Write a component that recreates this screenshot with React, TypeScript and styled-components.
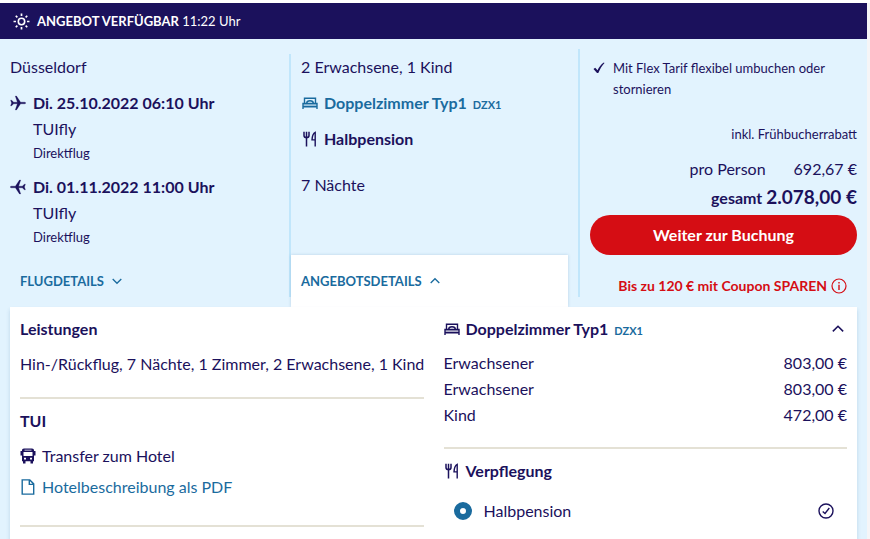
import React from "react";
import styled, { createGlobalStyle, css } from "styled-components";

const navy = "#1b115c";
const blue = "#1a6b9e";
const red = "#d50d14";
const sky = "#e2f3fe";

const GlobalStyle = createGlobalStyle`
  * { box-sizing: border-box; }
  html, body { margin: 0; background: #fff; }
  body, button, input {
    font-family: Lato, "Noto Sans", sans-serif;
    font-size: 16px;
    font-weight: 400;
    line-height: 24px;
    color: ${navy};
  }
  strong { font-weight: 700; }
  h2, h3, p, ul { margin: 0; padding: 0; font-size: 16px; }
  a { color: ${blue}; text-decoration: none; }
  button { border: 0; background: none; padding: 0; cursor: pointer; }
`;

const Page = styled.main`
  display: flex;
  flex-direction: column;
  height: 100vh;
  overflow: hidden;
  padding-right: 3px;
  border-top: 3px solid #fff;
  background: #f5f5f7;
`;
const Banner = styled.header`
  display: flex;
  flex: none;
  align-items: center;
  gap: 7px;
  height: 36px;
  padding: 0 13px;
  background: ${navy};
  color: #fff;
  font-size: 13px;
`;
const BannerText = styled.span`
  line-height: 20px;
`;
const Offer = styled.section`
  flex: 1;
  display: flex;
  flex-direction: column;
  background: ${sky};
`;
const Summary = styled.div`
  display: grid;
  grid-template-columns: repeat(3, minmax(0, 1fr));
`;
const Column = styled.div<{ $line?: number }>`
  display: flex;
  flex-direction: column;
  justify-content: space-between;
  ${(p) =>
    p.$line &&
    css`
      background: linear-gradient(#c1e6fb, #c1e6fb) 0 ${p.$line}px / 2px
        calc(100% - ${p.$line + 10}px) no-repeat;
    `}
`;
const ColumnBody = styled.div<{ $inset?: number }>`
  display: flex;
  flex-direction: column;
  gap: 12px;
  padding: 16px 10px 0 ${(p) => p.$inset ?? 10}px;
`;
const Flight = styled.div`
  display: grid;
  grid-template-columns: 16px 1fr;
  column-gap: 7px;
  align-items: center;
`;
const FlightInfo = styled.span<{ $small?: boolean }>`
  grid-column: 2;
  font-size: ${(p) => (p.$small ? 13 : 16)}px;
  line-height: ${(p) => (p.$small ? 20 : 28)}px;
`;
const IconLine = styled.div<{ $linked?: boolean }>`
  display: flex;
  align-items: center;
  gap: 6px;
  padding-left: 1px;
  font-weight: 700;
  color: ${(p) => (p.$linked ? blue : navy)};
`;
const Code = styled.small`
  padding-top: 3px;
  font-size: 11px;
  font-weight: 700;
  line-height: 16px;
  color: ${blue};
`;
const Nights = styled.p`
  padding-top: 10px;
`;
const Tab = styled.button<{ $open?: boolean }>`
  display: flex;
  align-items: center;
  gap: 8px;
  height: 52px;
  margin: 0 10px;
  padding: 0 10px;
  font-size: 13px;
  font-weight: 700;
  color: ${blue};
  ${(p) =>
    p.$open &&
    css`
      margin-left: 2px;
      background: #fff;
      box-shadow: 0 0 3px rgba(27, 90, 140, 0.2);
    `}
`;
const PriceColumn = styled(Column)`
  padding: 19px 10px 9px 12px;
  justify-content: flex-start;
`;
const Perk = styled.li`
  display: flex;
  gap: 8px;
  padding-left: 3px;
  font-size: 13px;
  line-height: 21px;
  svg { flex: none; margin-top: 4px; }
`;
const Discount = styled.p`
  margin-top: 24px;
  font-size: 13px;
  line-height: 20px;
  text-align: right;
`;
const PriceLine = styled.p<{ $total?: boolean }>`
  display: flex;
  justify-content: flex-end;
  align-items: baseline;
  gap: ${(p) => (p.$total ? 4 : 28)}px;
  margin-top: ${(p) => (p.$total ? 2 : 13)}px;
  font-weight: ${(p) => (p.$total ? 700 : 400)};
  line-height: ${(p) => (p.$total ? 28 : 24)}px;
`;
const Total = styled.strong`
  font-size: 19px;
`;
const BookButton = styled.button`
  height: 40px;
  margin-top: 3px;
  border-radius: 20px;
  background: ${red};
  color: #fff;
  font-weight: 700;
`;
const Coupon = styled.button`
  display: flex;
  align-self: flex-end;
  align-items: center;
  gap: 4px;
  margin: 19px 10px 0 0;
  color: ${red};
  font-size: 14px;
  font-weight: 700;
`;
const Details = styled.div`
  position: relative;
  flex: 1;
  display: grid;
  grid-template-columns: repeat(2, minmax(0, 1fr));
  column-gap: 20px;
  margin: 0 10px;
  padding: 0 10px;
  background: #fff;
  box-shadow: 0 3px 4px rgba(27, 90, 140, 0.2);
`;
const Block = styled.section<{ $space?: number }>`
  padding: 10px 0 ${(p) => p.$space ?? 21}px;
  border-bottom: 2px solid #e4e1d5;
`;
const BlockTitle = styled.h3`
  display: flex;
  align-items: center;
  gap: 6px;
  line-height: 24px;
`;
const RoomToggle = styled.button`
  margin-left: auto;
  padding-right: 3px;
  display: flex;
`;
const Services = styled.p`
  padding-top: 11px;
  white-space: nowrap;
`;
const ServiceList = styled.ul`
  display: grid;
  gap: 7px;
  padding-top: 11px;
  list-style: none;
  li, a { display: flex; align-items: center; gap: 6px; }
`;
const Prices = styled.table`
  width: 100%;
  margin-top: 9px;
  border-collapse: collapse;
  th, td { padding: 0; line-height: 26px; font-weight: 400; text-align: left; }
  td { text-align: right; }
`;
const BoardOption = styled.label`
  display: flex;
  align-items: center;
  gap: 12px;
  padding: 16px 13px 16px 10px;
  svg { margin-left: auto; }
`;
const Radio = styled.input`
  appearance: none;
  width: 18px;
  height: 18px;
  margin: 0;
  border: 6px solid ${blue};
  border-radius: 50%;
  background: #fff;
`;

const Icon = ({ size = 16, children }: { size?: number; children: React.ReactNode }) => (
  <svg width={size} height={size} viewBox="0 0 16 16" fill="none" stroke="currentColor" strokeWidth="1.4" aria-hidden="true">
    {children}
  </svg>
);
const SunIcon = () => (
  <Icon size={17}>
    <circle cx="8" cy="8" r="3" strokeWidth="1.5" />
    <path strokeWidth="1.6" d="M8 .5v2.300M8 13.200v2.300M.5 8h2.300M13.200 8h2.300M2.600 2.600l1.500 1.500M11.900 11.900l1.500 1.500M2.600 13.400l1.500-1.500M11.900 4.100l1.500-1.500" />
  </Icon>
);
const PlaneIcon = ({ back }: { back?: boolean }) => (
  <Icon>
    <path
      transform={back ? "matrix(-1 0 0 1 16 0)" : undefined}
      fill="currentColor"
      strokeWidth=".3"
      strokeLinejoin="round"
      d="M.6 5.200h1.100l1.900 2h3.800L5.300 1.100h1.200L10.600 7.200h3.700c.8 0 1.500.4 1.500.8s-.7.8-1.500.8h-3.700L6.500 14.900H5.300L7.400 8.800H3.600l-1.900 2H.6L1.600 8z"
    />
  </Icon>
);
const BedIcon = () => (
  <Icon>
    <path d="M2.500 8V3.200h11V8M1 14V8.500h14V14M1 11.800h14M4.700 8c0-1.600.8-2.200 3.300-2.200s3.300.6 3.300 2.200" />
    <path stroke="none" fill="currentColor" fillOpacity=".35" d="M1 8.500h14v3.300H1z" />
  </Icon>
);
const CutleryIcon = () => (
  <Icon>
    <path strokeWidth="1.5" d="M2 .8v3.600c0 1.600 1 2.200 2.500 2.200S7 6 7 4.400V.8M4.500.8v14.700" />
    <path d="M13.200 15.500V1.300c-1.700.5-3.200 4-3.200 7.600h3.200" />
  </Icon>
);
const BusIcon = () => (
  <Icon>
    <path fill="currentColor" stroke="none" fillRule="evenodd" d="M4 .5h8c1.300 0 2 .8 2 2V3h1.500v4.600H14v5.600h-1V15.500h-2.500v-2.300h-5v2.300H3v-2.300H2V7.600H.5V3H2v-.5c0-1.200.7-2 2-2zM4.500 1.800v.7h7v-.7zM3.500 4v4h9V4zM4 9.700v1.700h2V9.700zm6 0v1.700h2V9.700z" />
  </Icon>
);
const FileIcon = () => (
  <Icon>
    <path d="M2.200.9h7.600l3.900 4v10.200H2.200zM9.300 1v4.400h4.300" />
  </Icon>
);
const CheckIcon = () => (
  <svg width="12" height="12" viewBox="0 0 12 12" aria-hidden="true">
    <path d="M.5 7l1.700-1.200L4.500 8.200C6 5.300 8 2.600 10.800.6l.7.5C8.800 4 7 7.200 5.300 11H4z" fill="currentColor" />
  </svg>
);
const ChevronIcon = ({ up, size = 10 }: { up?: boolean; size?: number }) => (
  <svg width={size} height={size} viewBox="0 0 10 10" fill="none" stroke="currentColor" strokeWidth="1.300" aria-hidden="true">
    <path d={up ? "M.7 7L5 2.700 9.300 7" : "M.7 3L5 7.300 9.300 3"} />
  </svg>
);
const InfoIcon = () => (
  <Icon>
    <circle cx="8" cy="8" r="7" strokeWidth="1.200" />
    <path d="M8 6.800V12M8 4v1.500" />
  </Icon>
);
const CheckCircleIcon = () => (
  <Icon>
    <circle cx="8" cy="8" r="7" />
    <path d="M4.700 8.500l2.300 2L11.300 5" />
  </Icon>
);

const flights = [
  { date: "Di. 25.10.2022 06:10 Uhr", back: false },
  { date: "Di. 01.11.2022 11:00 Uhr", back: true },
];
const travellers = [
  ["Erwachsener", "803,00 €"],
  ["Erwachsener", "803,00 €"],
  ["Kind", "472,00 €"],
];

export default function App() {
  return (
    <>
      <GlobalStyle />
      <Page>
        <Banner>
          <SunIcon />
          <BannerText>
            <strong>ANGEBOT VERFÜGBAR</strong> 11:22 Uhr
          </BannerText>
        </Banner>
        <Offer>
          <Summary>
            <Column>
              <ColumnBody>
                <p>Düsseldorf</p>
                {flights.map((f) => (
                  <Flight key={f.date}>
                    <PlaneIcon back={f.back} />
                    <strong>{f.date}</strong>
                    <FlightInfo>TUIfly</FlightInfo>
                    <FlightInfo $small>Direktflug</FlightInfo>
                  </Flight>
                ))}
              </ColumnBody>
              <Tab aria-expanded={false}>
                FLUGDETAILS <ChevronIcon />
              </Tab>
            </Column>
            <Column $line={15}>
              <ColumnBody $inset={12}>
                <p>2 Erwachsene, 1 Kind</p>
                <IconLine $linked>
                  <BedIcon />
                  <a href="#zimmer">Doppelzimmer Typ1</a>
                  <Code>DZX1</Code>
                </IconLine>
                <IconLine>
                  <CutleryIcon />
                  Halbpension
                </IconLine>
                <Nights>7 Nächte</Nights>
              </ColumnBody>
              <Tab $open aria-expanded>
                ANGEBOTSDETAILS <ChevronIcon up />
              </Tab>
            </Column>
            <PriceColumn $line={10}>
              <ul>
                <Perk>
                  <CheckIcon />
                  Mit Flex Tarif flexibel umbuchen oder stornieren
                </Perk>
              </ul>
              <Discount>inkl. Frühbucherrabatt</Discount>
              <PriceLine>
                <span>pro Person</span>
                <span>692,67 €</span>
              </PriceLine>
              <PriceLine $total>
                <span>gesamt</span>
                <Total>2.078,00 €</Total>
              </PriceLine>
              <BookButton>Weiter zur Buchung</BookButton>
              <Coupon>
                Bis zu 120 € mit Coupon SPAREN <InfoIcon />
              </Coupon>
            </PriceColumn>
          </Summary>
          <Details>
            <div>
              <Block>
                <BlockTitle>Leistungen</BlockTitle>
                <Services>Hin-/Rückflug, 7 Nächte, 1 Zimmer, 2 Erwachsene, 1 Kind</Services>
              </Block>
              <Block $space={26}>
                <BlockTitle>TUI</BlockTitle>
                <ServiceList>
                  <li>
                    <BusIcon />
                    Transfer zum Hotel
                  </li>
                  <li>
                    <a href="#hotel-pdf">
                      <FileIcon />
                      Hotelbeschreibung als PDF
                    </a>
                  </li>
                </ServiceList>
              </Block>
            </div>
            <div>
              <Block $space={19}>
                <BlockTitle>
                  <BedIcon />
                  Doppelzimmer Typ1
                  <Code>DZX1</Code>
                  <RoomToggle aria-label="Zimmerdetails schließen">
                    <ChevronIcon up size={12} />
                  </RoomToggle>
                </BlockTitle>
                <Prices>
                  <tbody>
                    {travellers.map(([who, price], i) => (
                      <tr key={i}>
                        <th scope="row">{who}</th>
                        <td>{price}</td>
                      </tr>
                    ))}
                  </tbody>
                </Prices>
              </Block>
              <Block>
                <BlockTitle>
                  <CutleryIcon />
                  Verpflegung
                </BlockTitle>
                <BoardOption>
                  <Radio type="radio" name="board" defaultChecked />
                  Halbpension
                  <CheckCircleIcon />
                </BoardOption>
              </Block>
            </div>
          </Details>
        </Offer>
      </Page>
    </>
  );
}
